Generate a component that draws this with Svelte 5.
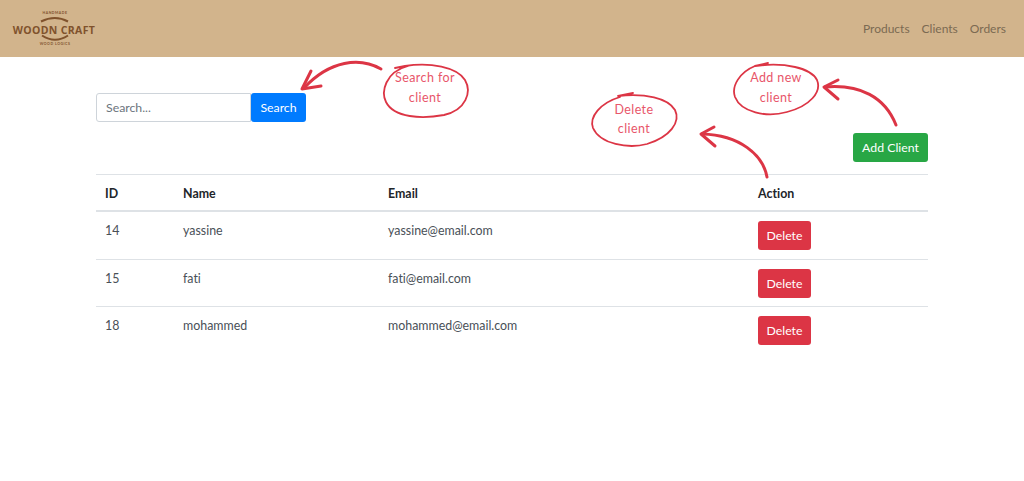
<script>
  const clients = [
    { id: 14, name: "yassine", email: "yassine@email.com" },
    { id: 15, name: "fati", email: "fati@email.com" },
    { id: 18, name: "mohammed", email: "mohammed@email.com" }
  ];
</script>

<header class="navbar">
  <svg class="logo" width="90" height="40" viewBox="0 0 90 40" aria-label="Woodn Craft">
    <path d="M31 12.5 Q45 5.5 58 12.5" fill="none" stroke="#80522c" stroke-width="2" />
    <path d="M32 26.5 Q45 35 58 26.5" fill="none" stroke="#80522c" stroke-width="2" />
    <text class="logo__small" x="45" y="5">HANDMADE</text>
    <text class="logo__main" x="44" y="24.5">WOODN CRAFT</text>
    <text class="logo__small" x="45" y="36">WOOD LOGICS</text>
  </svg>
  <nav class="navbar__links">
    <a href="#products">Products</a>
    <a href="#clients">Clients</a>
    <a href="#orders">Orders</a>
  </nav>
</header>

<main class="page">
  <form class="search">
    <input class="search__input" type="text" placeholder="Search..." />
    <button class="btn btn--blue search__btn" type="button">Search</button>
  </form>

  <div class="actions">
    <button class="btn btn--green btn--add" type="button">Add Client</button>
  </div>

  <table class="table">
    <colgroup>
      <col style="width: 78px" />
      <col style="width: 205px" />
      <col style="width: 370px" />
      <col />
    </colgroup>
    <thead>
      <tr>
        <th>ID</th>
        <th>Name</th>
        <th>Email</th>
        <th>Action</th>
      </tr>
    </thead>
    <tbody>
      {#each clients as client}
        <tr>
          <td>{client.id}</td>
          <td>{client.name}</td>
          <td>{client.email}</td>
          <td><button class="btn btn--red" type="button">Delete</button></td>
        </tr>
      {/each}
    </tbody>
  </table>
</main>

<!-- hand drawn notes lying over the page -->
<svg class="notes" width="1024" height="481" viewBox="0 0 1024 481">
  <g class="notes__line">
    <path d="M381 69 C360 57 330 60 304 88" />
    <path d="M311 71 L302 89 L321 86" />
    <path d="M408 66 C385 72 381 92 386 102 C394 118 422 119 444 115 C466 110 472 92 465 80 C457 67 430 62 405 66 L395 68" class="notes__thin" />
    <path d="M896 125 C885 97 860 84 825 87" />
    <path d="M838 80 L824 87 L838 99" />
    <path d="M755 66 C740 72 731 86 735 97 C741 112 766 118 787 112 C810 106 822 92 817 80 C811 68 785 62 755 66 L768 63" class="notes__thin" />
    <path d="M767 177 C763 155 740 135 702 134" />
    <path d="M714 127 L701 134 L715 146" />
    <path d="M620 97 C600 103 589 117 593 128 C600 144 628 149 647 144 C670 137 681 122 675 110 C668 98 645 93 618 96 L633 93" class="notes__thin" />
  </g>
  <text class="notes__text" x="425" y="82">Search for</text>
  <text class="notes__text" x="425" y="102">client</text>
  <text class="notes__text" x="776" y="82">Add new</text>
  <text class="notes__text" x="776" y="102">client</text>
  <text class="notes__text" x="634" y="114">Delete</text>
  <text class="notes__text" x="634" y="133">client</text>
</svg>

<style>
  :global(body) {
    margin: 0;
    background: #fff;
    font-family: "Lato", "Open Sans", sans-serif;
    font-variant-ligatures: none;
  }

  .navbar {
    display: flex;
    justify-content: space-between;
    align-items: center;
    height: 57px;
    padding: 0 18px 0 10px;
    background: #d2b48c;
    box-sizing: border-box;
  }

  .navbar__links {
    display: flex;
    gap: 12px;
  }

  .navbar__links a {
    color: #7b6a52;
    font-size: 12px;
    text-decoration: none;
  }

  .logo__main {
    fill: #80522c;
    font-size: 10.5px;
    font-weight: 700;
    font-family: "Open Sans", sans-serif;
    text-anchor: middle;
    letter-spacing: 0.35px;
  }

  .logo__small {
    fill: #80522c;
    font-size: 3.5px;
    font-weight: 700;
    letter-spacing: 0.5px;
    text-anchor: middle;
  }

  .page {
    width: 832px;
    margin: 0 auto;
    padding-top: 36px;
  }

  .search {
    display: flex;
    margin-bottom: 11px;
  }

  .search__input {
    width: 155px;
    height: 29px;
    padding: 0 9px;
    color: #495057;
    font-family: inherit;
    font-size: 12.3px;
    border: 1px solid #ced4da;
    border-radius: 3px 0 0 3px;
    box-sizing: border-box;
    outline: none;
  }

  .search__input::placeholder {
    color: #6c757d;
  }

  .btn {
    width: 53px;
    height: 29px;
    padding: 0;
    color: #fff;
    font-family: inherit;
    font-size: 12.3px;
    border: none;
    border-radius: 3px;
    cursor: pointer;
  }

  .btn--blue {
    background: #007bff;
  }

  .btn--green {
    background: #28a745;
  }

  .btn--red {
    background: #dc3545;
  }

  .btn--add {
    width: 75px;
  }

  .search__btn {
    width: 55px;
  }

  .actions {
    display: flex;
    justify-content: flex-end;
    margin-bottom: 12px;
  }

  .table {
    width: 100%;
    table-layout: fixed;
    border-collapse: collapse;
    color: #212529;
    font-size: 12.4px;
  }

  th,
  td {
    text-align: left;
    vertical-align: top;
    line-height: 19px;
    border-top: 1px solid #dee2e6;
  }

  th {
    padding: 9px 9px 7px;
    font-weight: 700;
    border-bottom: 2px solid #dee2e6;
  }

  td {
    padding: 9px 9px 8.5px;
    color: #495057;
  }

  tbody tr:first-child td {
    border-top: none;
  }

  td .btn {
    display: block;
  }

  .notes {
    position: absolute;
    top: 0;
    left: 0;
    pointer-events: none;
  }

  .notes__line path {
    fill: none;
    stroke: #dc3545;
    stroke-width: 3;
    stroke-linecap: round;
    stroke-linejoin: round;
  }

  .notes__line .notes__thin {
    stroke-width: 1.8;
  }

  .notes__text {
    fill: #e8566a;
    font-family: "Lato", sans-serif;
    font-size: 12.5px;
    letter-spacing: 0.4px;
    text-anchor: middle;
  }
</style>
